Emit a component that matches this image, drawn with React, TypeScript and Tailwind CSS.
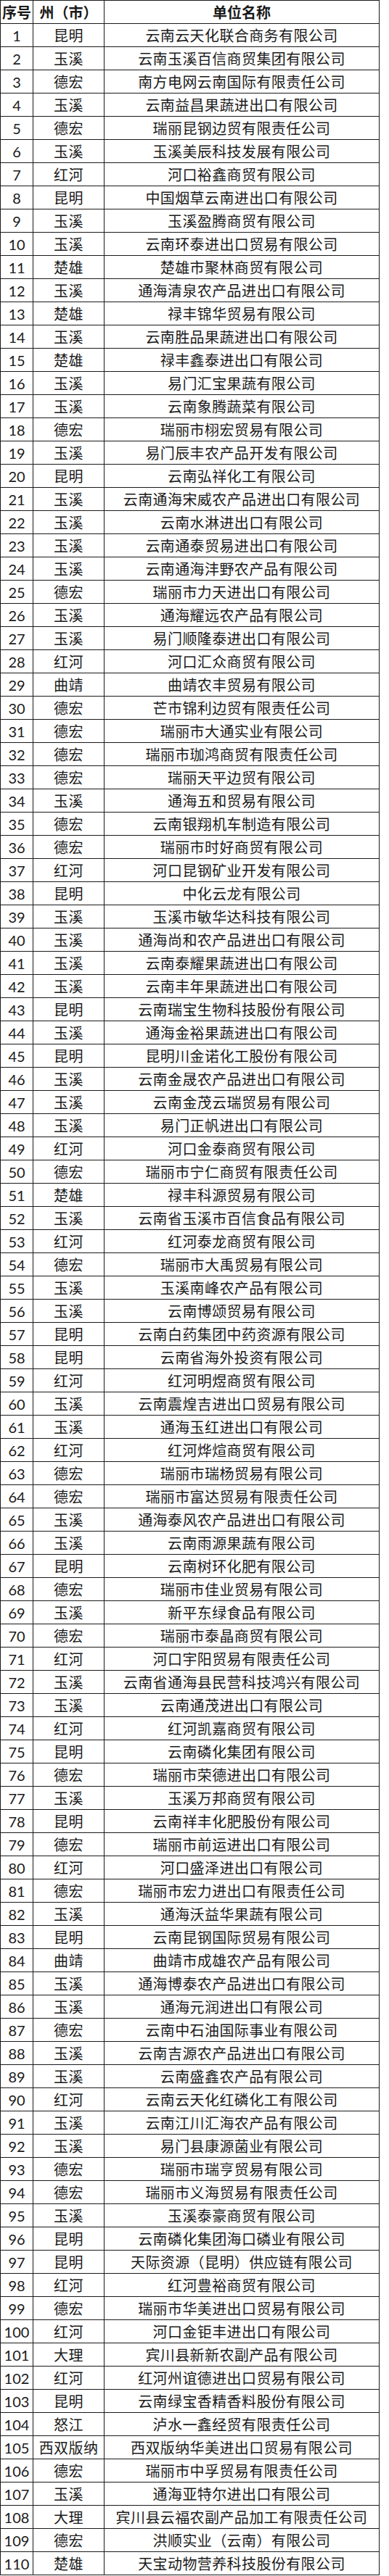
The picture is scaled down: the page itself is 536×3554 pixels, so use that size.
const rows: [string, string][] = [
  ["昆明", "云南云天化联合商务有限公司"],
  ["玉溪", "云南玉溪百信商贸集团有限公司"],
  ["德宏", "南方电网云南国际有限责任公司"],
  ["玉溪", "云南益昌果蔬进出口有限公司"],
  ["德宏", "瑞丽昆钢边贸有限责任公司"],
  ["玉溪", "玉溪美辰科技发展有限公司"],
  ["红河", "河口裕鑫商贸有限公司"],
  ["昆明", "中国烟草云南进出口有限公司"],
  ["玉溪", "玉溪盈腾商贸有限公司"],
  ["玉溪", "云南环泰进出口贸易有限公司"],
  ["楚雄", "楚雄市聚林商贸有限公司"],
  ["玉溪", "通海清泉农产品进出口有限公司"],
  ["楚雄", "禄丰锦华贸易有限公司"],
  ["玉溪", "云南胜品果蔬进出口有限公司"],
  ["楚雄", "禄丰鑫泰进出口有限公司"],
  ["玉溪", "易门汇宝果蔬有限公司"],
  ["玉溪", "云南象腾蔬菜有限公司"],
  ["德宏", "瑞丽市栩宏贸易有限公司"],
  ["玉溪", "易门辰丰农产品开发有限公司"],
  ["昆明", "云南弘祥化工有限公司"],
  ["玉溪", "云南通海宋威农产品进出口有限公司"],
  ["玉溪", "云南水淋进出口有限公司"],
  ["玉溪", "云南通泰贸易进出口有限公司"],
  ["玉溪", "云南通海沣野农产品有限公司"],
  ["德宏", "瑞丽市力天进出口有限公司"],
  ["玉溪", "通海耀远农产品有限公司"],
  ["玉溪", "易门顺隆泰进出口有限公司"],
  ["红河", "河口汇众商贸有限公司"],
  ["曲靖", "曲靖农丰贸易有限公司"],
  ["德宏", "芒市锦利边贸有限责任公司"],
  ["德宏", "瑞丽市大通实业有限公司"],
  ["德宏", "瑞丽市珈鸿商贸有限责任公司"],
  ["德宏", "瑞丽天平边贸有限公司"],
  ["玉溪", "通海五和贸易有限公司"],
  ["德宏", "云南银翔机车制造有限公司"],
  ["德宏", "瑞丽市时好商贸有限公司"],
  ["红河", "河口昆钢矿业开发有限公司"],
  ["昆明", "中化云龙有限公司"],
  ["玉溪", "玉溪市敏华达科技有限公司"],
  ["玉溪", "通海尚和农产品进出口有限公司"],
  ["玉溪", "云南泰耀果蔬进出口有限公司"],
  ["玉溪", "云南丰年果蔬进出口有限公司"],
  ["昆明", "云南瑞宝生物科技股份有限公司"],
  ["玉溪", "通海金裕果蔬进出口有限公司"],
  ["昆明", "昆明川金诺化工股份有限公司"],
  ["玉溪", "云南金晟农产品进出口有限公司"],
  ["玉溪", "云南金茂云瑞贸易有限公司"],
  ["玉溪", "易门正帆进出口有限公司"],
  ["红河", "河口金泰商贸有限公司"],
  ["德宏", "瑞丽市宁仁商贸有限责任公司"],
  ["楚雄", "禄丰科源贸易有限公司"],
  ["玉溪", "云南省玉溪市百信食品有限公司"],
  ["红河", "红河泰龙商贸有限公司"],
  ["德宏", "瑞丽市大禹贸易有限公司"],
  ["玉溪", "玉溪南峰农产品有限公司"],
  ["玉溪", "云南博颂贸易有限公司"],
  ["昆明", "云南白药集团中药资源有限公司"],
  ["昆明", "云南省海外投资有限公司"],
  ["红河", "红河明煜商贸有限公司"],
  ["玉溪", "云南震煌吉进出口贸易有限公司"],
  ["玉溪", "通海玉红进出口有限公司"],
  ["红河", "红河烨煊商贸有限公司"],
  ["德宏", "瑞丽市瑞杨贸易有限公司"],
  ["德宏", "瑞丽市富达贸易有限责任公司"],
  ["玉溪", "通海泰风农产品进出口有限公司"],
  ["玉溪", "云南雨源果蔬有限公司"],
  ["昆明", "云南树环化肥有限公司"],
  ["德宏", "瑞丽市佳业贸易有限公司"],
  ["玉溪", "新平东绿食品有限公司"],
  ["德宏", "瑞丽市泰晶商贸有限公司"],
  ["红河", "河口宇阳贸易有限责任公司"],
  ["玉溪", "云南省通海县民营科技鸿兴有限公司"],
  ["玉溪", "云南通茂进出口有限公司"],
  ["红河", "红河凯嘉商贸有限公司"],
  ["昆明", "云南磷化集团有限公司"],
  ["德宏", "瑞丽市荣德进出口有限公司"],
  ["玉溪", "玉溪万邦商贸有限公司"],
  ["昆明", "云南祥丰化肥股份有限公司"],
  ["德宏", "瑞丽市前运进出口有限公司"],
  ["红河", "河口盛泽进出口有限公司"],
  ["德宏", "瑞丽市宏力进出口有限责任公司"],
  ["玉溪", "通海沃益华果蔬有限公司"],
  ["昆明", "云南昆钢国际贸易有限公司"],
  ["曲靖", "曲靖市成雄农产品有限公司"],
  ["玉溪", "通海博泰农产品进出口有限公司"],
  ["玉溪", "通海元润进出口有限公司"],
  ["德宏", "云南中石油国际事业有限公司"],
  ["玉溪", "云南吉源农产品进出口有限公司"],
  ["玉溪", "云南盛鑫农产品有限公司"],
  ["红河", "云南云天化红磷化工有限公司"],
  ["玉溪", "云南江川汇海农产品有限公司"],
  ["玉溪", "易门县康源菌业有限公司"],
  ["德宏", "瑞丽市瑞亨贸易有限公司"],
  ["德宏", "瑞丽市义海贸易有限责任公司"],
  ["玉溪", "玉溪泰豪商贸有限公司"],
  ["昆明", "云南磷化集团海口磷业有限公司"],
  ["昆明", "天际资源（昆明）供应链有限公司"],
  ["红河", "红河豊裕商贸有限公司"],
  ["德宏", "瑞丽市华美进出口贸易有限公司"],
  ["红河", "河口金钜丰进出口有限公司"],
  ["大理", "宾川县新新农副产品有限公司"],
  ["红河", "红河州谊德进出口贸易有限公司"],
  ["昆明", "云南绿宝香精香料股份有限公司"],
  ["怒江", "泸水一鑫经贸有限责任公司"],
  ["西双版纳", "西双版纳华美进出口贸易有限公司"],
  ["德宏", "瑞丽市中孚贸易有限责任公司"],
  ["玉溪", "通海亚特尔进出口有限公司"],
  ["大理", "宾川县云福农副产品加工有限责任公司"],
  ["德宏", "洪顺实业（云南）有限公司"],
  ["楚雄", "天宝动物营养科技股份有限公司"],
];

const cell = "border border-[#1a1a1a] p-0 text-center align-middle whitespace-nowrap";

export default function App() {
  return (
    <div className="w-[536px] bg-white text-[#1a1a1a] font-['Lato','Noto_Sans_CJK_SC',sans-serif]">
      <table className="w-[523px] border-collapse table-fixed">
        <colgroup>
          <col className="w-[45px]" />
          <col className="w-[98px]" />
          <col />
        </colgroup>
        <thead>
          <tr className="h-[32px]">
            <th className={`${cell} text-[20px] font-bold`}>序号</th>
            <th className={`${cell} text-[20px] font-bold`}>州（市）</th>
            <th className={`${cell} text-[20px] font-bold`}>单位名称</th>
          </tr>
        </thead>
        <tbody>
          {rows.map(([city, name], i) => (
            <tr key={i} className="h-[32px]">
              <td className={`${cell} text-[20px] leading-none`}>{i + 1}</td>
              <td className={`${cell} text-[20px] leading-none tracking-[0.4px]`}>{city}</td>
              <td className={`${cell} text-[20px] leading-none tracking-[0.4px]`}>{name}</td>
            </tr>
          ))}
        </tbody>
      </table>
    </div>
  );
}
